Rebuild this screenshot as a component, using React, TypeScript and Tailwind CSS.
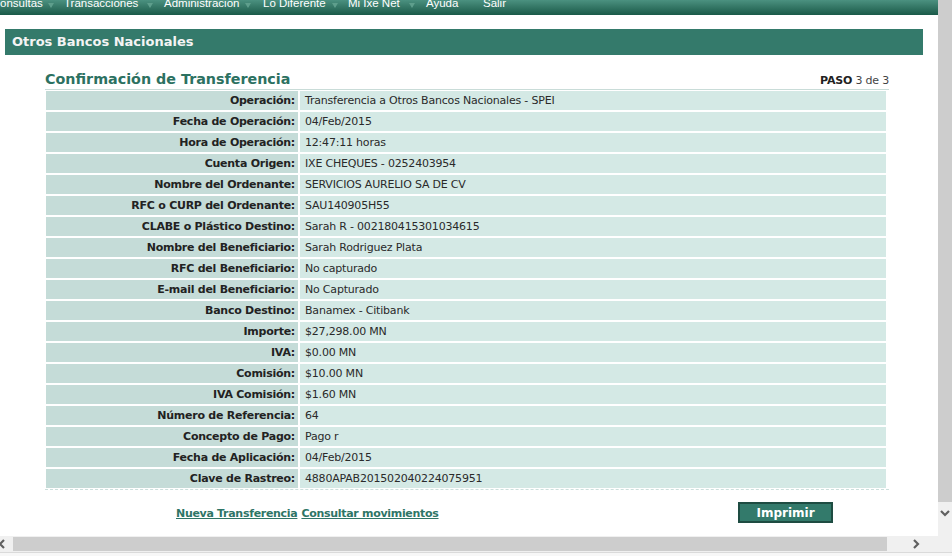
import type { ReactNode } from "react"

const rows: [string, string][] = [
  ["Operación:", "Transferencia a Otros Bancos Nacionales - SPEI"],
  ["Fecha de Operación:", "04/Feb/2015"],
  ["Hora de Operación:", "12:47:11 horas"],
  ["Cuenta Origen:", "IXE CHEQUES - 0252403954"],
  ["Nombre del Ordenante:", "SERVICIOS AURELIO SA DE CV"],
  ["RFC o CURP del Ordenante:", "SAU140905H55"],
  ["CLABE o Plástico Destino:", "Sarah R - 002180415301034615"],
  ["Nombre del Beneficiario:", "Sarah Rodriguez Plata"],
  ["RFC del Beneficiario:", "No capturado"],
  ["E-mail del Beneficiario:", "No Capturado"],
  ["Banco Destino:", "Banamex - Citibank"],
  ["Importe:", "$27,298.00 MN"],
  ["IVA:", "$0.00 MN"],
  ["Comisión:", "$10.00 MN"],
  ["IVA Comisión:", "$1.60 MN"],
  ["Número de Referencia:", "64"],
  ["Concepto de Pago:", "Pago r"],
  ["Fecha de Aplicación:", "04/Feb/2015"],
  ["Clave de Rastreo:", "4880APAB201502040224075951"],
]

function Arrow() {
  return (
    <svg width="6" height="5" viewBox="0 0 6 5" className="mt-[7px] shrink-0">
      <polygon points="0,0 6,0 3,5" fill="#5e9e8c" />
    </svg>
  )
}

function NavItem({ w, children }: { w: string; children: ReactNode }) {
  return <span className={`${w} shrink-0 whitespace-nowrap`}>{children}</span>
}

function TopNav() {
  return (
    <div className="h-[15px] w-full overflow-hidden bg-gradient-to-b from-[#4b9180] to-[#1a5a49]">
      <div className="-mt-[4px] flex items-start font-['Liberation_Sans',Arial,sans-serif] text-[11.5px] leading-[14px] text-white">
        <NavItem w="w-[48px]">onsultas</NavItem>
        <span className="flex w-[16px]"><Arrow /></span>
        <NavItem w="w-[82px]">Transacciones</NavItem>
        <span className="flex w-[18px] pl-[1px]"><Arrow /></span>
        <NavItem w="w-[81px]">Administracion</NavItem>
        <span className="flex w-[18px]"><Arrow /></span>
        <NavItem w="w-[69px]">Lo Diferente</NavItem>
        <span className="flex w-[16px]"><Arrow /></span>
        <NavItem w="w-[61px]">Mi Ixe Net</NavItem>
        <span className="flex w-[17px]"><Arrow /></span>
        <NavItem w="w-[57px]">Ayuda</NavItem>
        <NavItem w="w-[40px]">Salir</NavItem>
      </div>
    </div>
  )
}

function Chevron({ dir }: { dir: "left" | "right" | "down" }) {
  const pts = dir === "left" ? "6,1 2,5 6,9" : dir === "right" ? "2,1 6,5 2,9" : "1,2 5,6 9,2"
  const size = dir === "down" ? { w: 10, h: 8 } : { w: 8, h: 10 }
  return (
    <svg width={size.w} height={size.h} viewBox={`0 0 ${size.w} ${size.h}`}>
      <polyline points={pts} fill="none" stroke="#606060" strokeWidth="2.2" />
    </svg>
  )
}

export default function App() {
  return (
    <div className="flex h-[556px] w-[952px] flex-col overflow-hidden bg-[#f0f0f0] font-['DejaVu_Sans',Verdana,sans-serif]">
      <div className="flex h-[536px] shrink-0">
        <div className="w-[938px] shrink-0 overflow-hidden bg-white">
          <TopNav />

          <div className="ml-[5px] mt-[14px] h-[26px] w-[918px] bg-[#347a6b] pl-[7px] text-[13px] font-bold leading-[26px] text-[#f4f4f4]">
            Otros Bancos Nacionales
          </div>

          <div className="ml-[45px] mt-[14px] w-[844px]">
            <div className="flex h-[20px] items-baseline justify-between">
              <h1 className="text-[14.3px] font-bold leading-[20px] text-[#2c7161]">Confirmación de Transferencia</h1>
              <span className="text-[11px] tracking-[-0.2px] text-[#444]">
                <b className="text-[#222]">PASO</b> 3 de 3
              </span>
            </div>

            <div className="border-t border-[#c9dcd8] pb-[1px] pl-[1px] pr-[3px] pt-[1px]">
              <div className="flex flex-col gap-[2px]">
                {rows.map(([label, value]) => (
                  <div key={label} className="flex h-[19px] gap-[2px] text-[11px] leading-[19px]">
                    <div className="w-[252px] shrink-0 bg-[#c5dcd8] pr-[3px] text-right font-bold tracking-[-0.25px] text-[#222]">
                      {label}
                    </div>
                    <div className="flex-1 bg-[#d4e9e5] pl-[5px] tracking-[-0.2px] text-[#2a2a2a]">{value}</div>
                  </div>
                ))}
              </div>
            </div>
            <div className="border-t border-dashed border-[#cddfdc]" />

            <div className="mt-[12px] flex h-[21px] items-center">
              <div className="flex gap-[4px] pl-[131px] pt-[1px] text-[11px] font-bold leading-[13px] tracking-[-0.3px] text-[#2e7566]">
                <a href="#" className="underline">Nueva Transferencia</a>
                <a href="#" className="underline">Consultar movimientos</a>
              </div>
              <button className="ml-auto mr-[56px] h-[21px] w-[95px] border-2 border-[#1e4c42] bg-[#337a6b] pt-[1px] text-[12px] font-bold leading-[16px] text-white">
                Imprimir
              </button>
            </div>
          </div>
        </div>

        <div className="flex w-[14px] shrink-0 flex-col bg-[#f0f0f0]">
          <div className="h-[502px] bg-[#cdcdcd]" />
          <div className="flex justify-center pt-[7px]">
            <Chevron dir="down" />
          </div>
        </div>
      </div>

      <div className="flex h-[16px] shrink-0 items-center bg-[#f0f0f0]">
        <div className="-ml-[2px] flex w-[15px] shrink-0 items-center">
          <Chevron dir="left" />
        </div>
        <div className="h-[14px] w-[874px] shrink-0 bg-[#cdcdcd]" />
        <div className="flex w-[49px] shrink-0 justify-center pl-[8px]">
          <Chevron dir="right" />
        </div>
        <div className="w-[14px]" />
      </div>
      <div className="h-[1px] shrink-0 bg-[#dadada]" />
      <div className="flex-1 bg-[#f7f7f7]" />
    </div>
  )
}
